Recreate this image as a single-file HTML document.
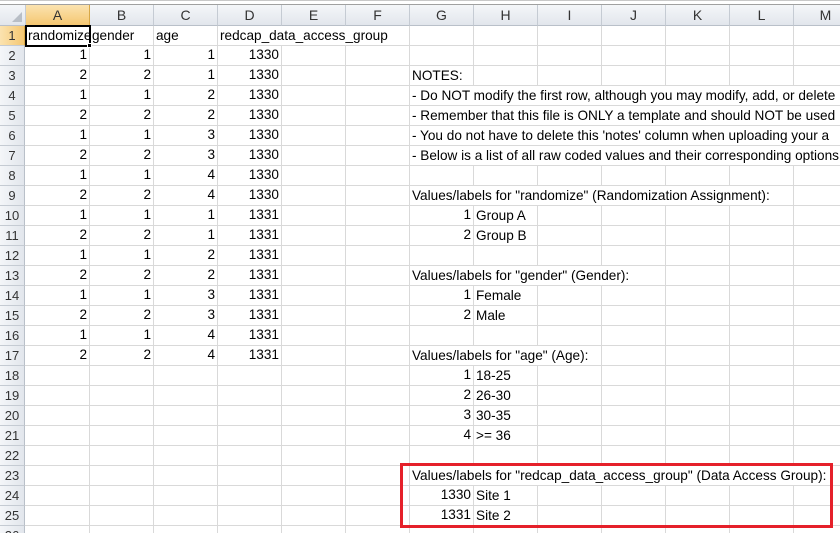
<!DOCTYPE html>
<html><head><meta charset="utf-8"><style>
*{margin:0;padding:0;box-sizing:border-box}
html,body{width:840px;height:533px;overflow:hidden}
body{background:#fff;position:relative;font-family:"Liberation Sans",sans-serif;font-size:13.6px;color:#000}
.v{position:absolute;top:5px;height:528px;width:1px;background:#d9d9d9}
.h{position:absolute;left:0;width:840px;height:1px;background:#d9d9d9}
.ch{position:absolute;top:5px;height:21px;background:linear-gradient(#f4f6f9,#e2e6ec);border-right:1px solid #c5cbd3;border-bottom:1px solid #b9c0c9;text-align:center;line-height:20px;font-size:14px;color:#333}
.rh{position:absolute;left:0;width:25px;height:20px;background:linear-gradient(90deg,#f4f6f9,#e2e6ec);border-right:1px solid #b9c0c9;border-bottom:1px solid #c5cbd3;text-align:center;line-height:20px;font-size:13px;color:#333}
.t{position:absolute;height:19px;line-height:20px;white-space:nowrap;background:#fff;padding-left:2px}
.r{position:absolute;line-height:20px;text-align:right;white-space:nowrap}
</style></head><body>
<div style="position:absolute;left:0;top:0;width:840px;height:5px;background:#fff;border-top:1px solid #c8c8c8;border-bottom:1px solid #a0a0a0"></div>
<div class="v" style="left:89px"></div><div class="v" style="left:153px"></div><div class="v" style="left:217px"></div><div class="v" style="left:281px"></div><div class="v" style="left:345px"></div><div class="v" style="left:409px"></div><div class="v" style="left:473px"></div><div class="v" style="left:537px"></div><div class="v" style="left:601px"></div><div class="v" style="left:665px"></div><div class="v" style="left:729px"></div><div class="v" style="left:793px"></div>
<div class="h" style="top:45px"></div><div class="h" style="top:65px"></div><div class="h" style="top:85px"></div><div class="h" style="top:105px"></div><div class="h" style="top:125px"></div><div class="h" style="top:145px"></div><div class="h" style="top:165px"></div><div class="h" style="top:185px"></div><div class="h" style="top:205px"></div><div class="h" style="top:225px"></div><div class="h" style="top:245px"></div><div class="h" style="top:265px"></div><div class="h" style="top:285px"></div><div class="h" style="top:305px"></div><div class="h" style="top:325px"></div><div class="h" style="top:345px"></div><div class="h" style="top:365px"></div><div class="h" style="top:385px"></div><div class="h" style="top:405px"></div><div class="h" style="top:425px"></div><div class="h" style="top:445px"></div><div class="h" style="top:465px"></div><div class="h" style="top:485px"></div><div class="h" style="top:505px"></div><div class="h" style="top:525px"></div>
<div class="ch" style="left:0;width:26px"><svg width="10" height="10" style="position:absolute;right:3px;bottom:3px"><path d="M10 0L10 10L0 10Z" fill="#b8bec6"/></svg></div>
<div class="ch" style="left:26px;width:64px;background:linear-gradient(#fbe3b0,#f5c771);border-right-color:#d8a847;border-bottom-color:#d8a847">A</div>
<div class="ch" style="left:90px;width:64px">B</div><div class="ch" style="left:154px;width:64px">C</div><div class="ch" style="left:218px;width:64px">D</div><div class="ch" style="left:282px;width:64px">E</div><div class="ch" style="left:346px;width:64px">F</div><div class="ch" style="left:410px;width:64px">G</div><div class="ch" style="left:474px;width:64px">H</div><div class="ch" style="left:538px;width:64px">I</div><div class="ch" style="left:602px;width:64px">J</div><div class="ch" style="left:666px;width:64px">K</div><div class="ch" style="left:730px;width:64px">L</div><div class="ch" style="left:794px;width:64px">M</div>
<div class="rh" style="top:26px;background:linear-gradient(90deg,#fbe3b0,#f5c771);border-right-color:#d8a847">1</div>
<div class="rh" style="top:46px">2</div><div class="rh" style="top:66px">3</div><div class="rh" style="top:86px">4</div><div class="rh" style="top:106px">5</div><div class="rh" style="top:126px">6</div><div class="rh" style="top:146px">7</div><div class="rh" style="top:166px">8</div><div class="rh" style="top:186px">9</div><div class="rh" style="top:206px">10</div><div class="rh" style="top:226px">11</div><div class="rh" style="top:246px">12</div><div class="rh" style="top:266px">13</div><div class="rh" style="top:286px">14</div><div class="rh" style="top:306px">15</div><div class="rh" style="top:326px">16</div><div class="rh" style="top:346px">17</div><div class="rh" style="top:366px">18</div><div class="rh" style="top:386px">19</div><div class="rh" style="top:406px">20</div><div class="rh" style="top:426px">21</div><div class="rh" style="top:446px">22</div><div class="rh" style="top:466px">23</div><div class="rh" style="top:486px">24</div><div class="rh" style="top:506px">25</div><div class="rh" style="top:526px">26</div>
<div class="t" style="left:26px;top:26px;width:63px;overflow:hidden">randomize</div>
<div class="t" style="left:90px;top:26px">gender</div>
<div class="t" style="left:154px;top:26px">age</div>
<div class="t" style="left:218px;top:26px">redcap_data_access_group</div>
<div style="position:absolute;left:25px;top:25px;width:66px;height:22px;border:2px solid #000"></div>
<div style="position:absolute;left:87px;top:43px;width:5px;height:5px;background:#000;border:1px solid #fff"></div>
<div class="r" style="left:26px;width:61px;top:45px">1<br>2<br>1<br>2<br>1<br>2<br>1<br>2<br>1<br>2<br>1<br>2<br>1<br>2<br>1<br>2</div>
<div class="r" style="left:90px;width:61px;top:45px">1<br>2<br>1<br>2<br>1<br>2<br>1<br>2<br>1<br>2<br>1<br>2<br>1<br>2<br>1<br>2</div>
<div class="r" style="left:154px;width:61px;top:45px">1<br>1<br>2<br>2<br>3<br>3<br>4<br>4<br>1<br>1<br>2<br>2<br>3<br>3<br>4<br>4</div>
<div class="r" style="left:218px;width:61px;top:45px">1330<br>1330<br>1330<br>1330<br>1330<br>1330<br>1330<br>1330<br>1331<br>1331<br>1331<br>1331<br>1331<br>1331<br>1331<br>1331</div>
<div class="t" style="left:410px;top:66px">NOTES:</div>
<div class="t" style="left:410px;top:86px"> - Do NOT modify the first row, although you may modify, add, or delete</div>
<div class="t" style="left:410px;top:106px"> - Remember that this file is ONLY a template and should NOT be used</div>
<div class="t" style="left:410px;top:126px"> - You do not have to delete this 'notes' column when uploading your a</div>
<div class="t" style="left:410px;top:146px"> - Below is a list of all raw coded values and their corresponding options</div>
<div class="t" style="left:410px;top:186px">Values/labels for "randomize" (Randomization Assignment):</div>
<div class="r" style="left:410px;width:61px;top:205px">1<br>2</div>
<div class="t" style="left:474px;top:206px">Group A</div><div class="t" style="left:474px;top:226px">Group B</div>
<div class="t" style="left:410px;top:266px">Values/labels for "gender" (Gender):</div>
<div class="r" style="left:410px;width:61px;top:285px">1<br>2</div>
<div class="t" style="left:474px;top:286px">Female</div><div class="t" style="left:474px;top:306px">Male</div>
<div class="t" style="left:410px;top:346px">Values/labels for "age" (Age):</div>
<div class="r" style="left:410px;width:61px;top:365px">1<br>2<br>3<br>4</div>
<div class="t" style="left:474px;top:366px">18-25</div><div class="t" style="left:474px;top:386px">26-30</div><div class="t" style="left:474px;top:406px">30-35</div><div class="t" style="left:474px;top:426px">&gt;= 36</div>
<div class="t" style="left:410px;top:466px">Values/labels for "redcap_data_access_group" (Data Access Group):</div>
<div class="r" style="left:410px;width:61px;top:485px">1330<br>1331</div>
<div class="t" style="left:474px;top:486px">Site 1</div><div class="t" style="left:474px;top:506px">Site 2</div>
<div style="position:absolute;left:400px;top:463px;width:433px;height:65px;border:3px solid #e5202a"></div>
</body></html>
